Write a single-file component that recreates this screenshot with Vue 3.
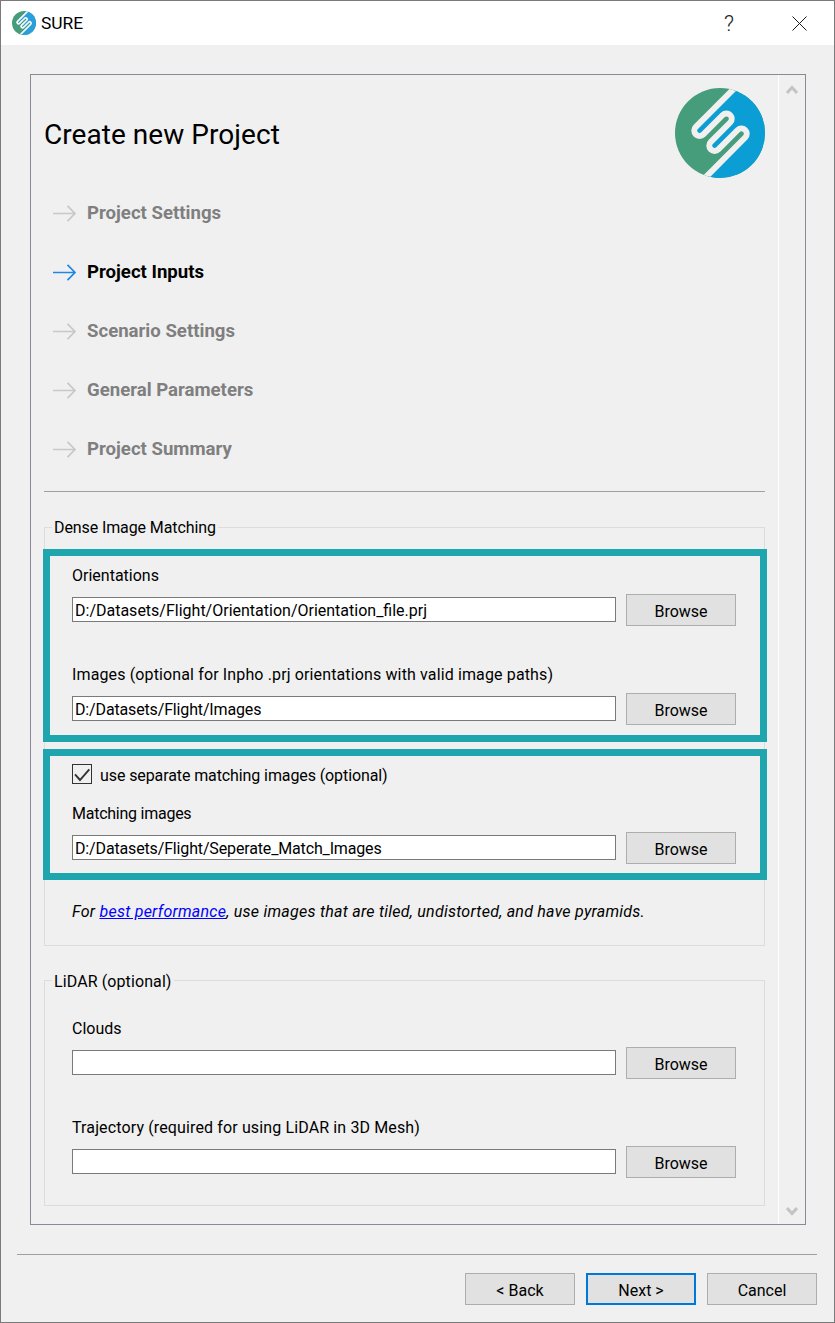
<script setup>
const steps = [
  { label: 'Project Settings', active: false },
  { label: 'Project Inputs', active: true },
  { label: 'Scenario Settings', active: false },
  { label: 'General Parameters', active: false },
  { label: 'Project Summary', active: false },
]
const logoPath =
  'M65 -5.33 L20.83 38.83 A5.3 5.3 0 0 0 28.33 46.33 L47.67 27 A5.3 5.3 0 0 1 55.17 34.5 L35.83 53.83 A5.3 5.3 0 0 0 43.33 61.33 L62.67 42 A5.3 5.3 0 0 1 70.17 49.5 L20 100'
const blueArea = logoPath + ' L100 100 L100 -5.33 Z'
</script>

<template>
  <div class="window">
    <header class="titlebar">
      <svg class="app-icon" viewBox="0 0 90 90">
        <defs>
          <clipPath id="small-disc"><circle cx="45" cy="45" r="45" /></clipPath>
        </defs>
        <g clip-path="url(#small-disc)">
          <rect width="90" height="90" fill="#459d7b" />
          <path :d="blueArea" fill="#2a9fdc" />
          <path :d="logoPath" fill="none" stroke="#ffffff" stroke-width="6" />
        </g>
      </svg>
      <span class="app-name">SURE</span>
      <span class="help">?</span>
      <svg class="close" viewBox="0 0 15 15">
        <path d="M0.5 0.5 L14.5 14.5 M14.5 0.5 L0.5 14.5" fill="none" stroke="#1a1a1a" stroke-width="1" />
      </svg>
    </header>

    <main class="body">
      <section class="panel">
        <div class="content">
          <div class="head">
            <h1>Create new Project</h1>
            <svg class="logo" viewBox="0 0 90 90">
              <defs>
                <clipPath id="large-disc"><circle cx="45" cy="45" r="45" /></clipPath>
              </defs>
              <g clip-path="url(#large-disc)">
                <rect width="90" height="90" fill="#459d7b" />
                <path :d="blueArea" fill="#0a9ed4" />
                <path :d="logoPath" fill="none" stroke="#f0f0f0" stroke-width="6" />
              </g>
            </svg>
          </div>

          <ul class="steps">
            <li v-for="s in steps" :key="s.label" class="step" :class="{ active: s.active }">
              <svg class="arrow" viewBox="0 0 24 17">
                <path d="M0 8.5 H22 M14.5 0.8 L22 8.5 L14.5 16.2" fill="none" stroke="currentColor" stroke-width="1.7" />
              </svg>
              <span>{{ s.label }}</span>
            </li>
          </ul>

          <hr class="rule" />

          <fieldset class="group dense">
            <legend>Dense Image Matching</legend>
            <div class="frame first">
              <label class="lbl">Orientations</label>
              <div class="row">
                <div class="input">D:/Datasets/Flight/Orientation/Orientation_file.prj</div>
                <button class="btn">Browse</button>
              </div>
              <label class="lbl second">Images (optional for Inpho .prj orientations with valid image paths)</label>
              <div class="row">
                <div class="input tight">D:/Datasets/Flight/Images</div>
                <button class="btn">Browse</button>
              </div>
            </div>
            <div class="frame two">
              <div class="check">
                <span class="box">
                  <svg viewBox="0 0 18 18"><path d="M2 9.3 L7 15 L16.3 4.3" fill="none" stroke="#333" stroke-width="1.9" /></svg>
                </span>
                <span class="check-text">use separate matching images (optional)</span>
              </div>
              <label class="lbl third">Matching images</label>
              <div class="row">
                <div class="input tight">D:/Datasets/Flight/Seperate_Match_Images</div>
                <button class="btn">Browse</button>
              </div>
            </div>
            <p class="note">For <a>best performance</a>, use images that are tiled, undistorted, and have pyramids.</p>
          </fieldset>

          <fieldset class="group lidar">
            <legend>LiDAR (optional)</legend>
            <div class="lidar-body">
              <label class="lbl">Clouds</label>
              <div class="row">
                <div class="input"></div>
                <button class="btn">Browse</button>
              </div>
              <label class="lbl second">Trajectory (required for using LiDAR in 3D Mesh)</label>
              <div class="row">
                <div class="input"></div>
                <button class="btn">Browse</button>
              </div>
            </div>
          </fieldset>
        </div>

        <aside class="scrollbar">
          <svg viewBox="0 0 12 9"><path d="M1 8 L6 2.5 L11 8" fill="none" stroke="#c4c4c4" stroke-width="3" /></svg>
          <svg viewBox="0 0 12 9"><path d="M1 1 L6 6.5 L11 1" fill="none" stroke="#c4c4c4" stroke-width="3" /></svg>
        </aside>
      </section>

      <hr class="foot-rule" />

      <footer class="actions">
        <button class="btn">&lt; Back</button>
        <button class="btn primary">Next &gt;</button>
        <button class="btn">Cancel</button>
      </footer>
    </main>
  </div>
</template>

<style>
html, body { margin: 0; background: #f0f0f0; }
</style>

<style scoped>
.window {
  width: 835px;
  height: 1323px;
  box-sizing: border-box;
  border: 1px solid #7a7a7a;
  background: #f0f0f0;
  font-family: Roboto, "Open Sans", "Liberation Sans", sans-serif;
  font-size: 16px;
  color: #000;
  display: flex;
  flex-direction: column;
}
.titlebar {
  height: 44px;
  flex: none;
  background: #fff;
  display: flex;
  align-items: center;
  padding-left: 11px;
}
.app-icon { width: 24px; height: 24px; }
.app-name { margin-left: 5px; font-size: 17.4px; }
.help { margin-left: auto; font-size: 22px; font-weight: 300; color: #222; }
.close { width: 15px; height: 15px; margin-left: 58px; margin-right: 27px; }
.body { flex: 1; display: flex; flex-direction: column; padding: 29px 17px 0 16px; }
.panel {
  margin-left: 13px;
  width: 776px;
  height: 1151px;
  box-sizing: border-box;
  border: 1px solid #8a8a96;
  display: flex;
  flex: none;
}
.content { width: 747px; padding: 13px 0 0 13px; flex: none; box-sizing: border-box; }
.head { display: flex; justify-content: space-between; width: 721px; height: 90px; }
h1 { margin: 29px 0 0; font-size: 28px; font-weight: 400; line-height: 36px; letter-spacing: 0.05px; }
.logo { width: 90px; height: 90px; }
.steps { list-style: none; margin: 5px 0 0; padding: 0 0 0 9px; }
.step {
  height: 59px;
  display: flex;
  align-items: center;
  gap: 10px;
  font-weight: 700;
  font-size: 18.6px;
  color: #7f7f7f;
}
.step.active { color: #000; }
.arrow { width: 24px; height: 17px; color: #c8c8c8; flex: none; margin-top: 2px; }
.step.active .arrow { color: #1e88e5; }
.rule { margin: 13px 0 0; border: 0; border-top: 1px solid #a0a0a0; width: 721px; }
.group {
  margin: 0;
  padding: 0;
  width: 721px;
  box-sizing: border-box;
  border: 1px solid #dcdcdc;
  min-width: 0;
}
.group legend { margin-left: 7px; padding: 2px 2px 0; font-size: 16px; line-height: 22px; }
.dense { margin-top: 23px; height: 431px; }
.dense legend { letter-spacing: -0.1px; }
.lidar { margin-top: 21px; height: 239px; }
.group.lidar legend { padding-top: 4px; letter-spacing: 0.1px; }
.lidar-body { padding: 0 28px 0 27px; }
.frame {
  box-sizing: border-box;
  width: 724px;
  margin-left: -2px;
  border: 7px solid #1fa5ad;
  padding: 0 23px 0 22px;
}
.first { margin-top: 10px; height: 193px; padding-top: 8px; }
.two { margin-top: 7px; height: 131px; padding-top: 8px; }
.lbl { display: block; line-height: 22px; height: 22px; padding-top: 1px; }
.second { margin-top: 37px; letter-spacing: 0.13px; }
.third { margin-top: 18px; letter-spacing: -0.25px; }
.row { display: flex; align-items: flex-start; gap: 10px; margin-top: 7px; height: 32px; }
.input {
  width: 544px;
  height: 25px;
  margin-top: 3px;
  box-sizing: border-box;
  background: #fff;
  border: 1px solid #7a7a7a;
  line-height: 23px;
  padding: 1px 0 0 2px;
  white-space: nowrap;
}
.input.tight { letter-spacing: -0.15px; }
.btn {
  width: 110px;
  height: 32px;
  box-sizing: border-box;
  background: #e1e1e1;
  border: 1px solid #adadad;
  font: inherit;
  color: #000;
  padding: 2px 0 0;
}
.btn.primary { border: 2px solid #0078d7; }
.check { display: flex; align-items: center; gap: 8px; height: 20px; }
.check-text { padding-top: 2px; letter-spacing: -0.1px; }
.box {
  width: 20px;
  height: 20px;
  box-sizing: border-box;
  border: 1px solid #333;
  display: block;
}
.box svg { display: block; width: 18px; height: 18px; }
.note { margin: 21px 0 0 27px; font-style: italic; line-height: 22px; letter-spacing: 0.25px; }
.note a { color: #0000ff; text-decoration: underline; }
.lidar-body > .lbl:first-child { margin-top: 24px; }
.scrollbar {
  flex: 1;
  border-left: 1px solid #fff;
  display: flex;
  flex-direction: column;
  justify-content: space-between;
  align-items: center;
  padding: 10px 0 8px;
}
.scrollbar svg { width: 12px; height: 9px; }
.foot-rule { margin: 29px 0 0; border: 0; border-top: 1px solid #a0a0a0; width: 800px; }
.actions { display: flex; justify-content: flex-end; gap: 11px; margin-top: 18px; width: 800px; }
</style>
